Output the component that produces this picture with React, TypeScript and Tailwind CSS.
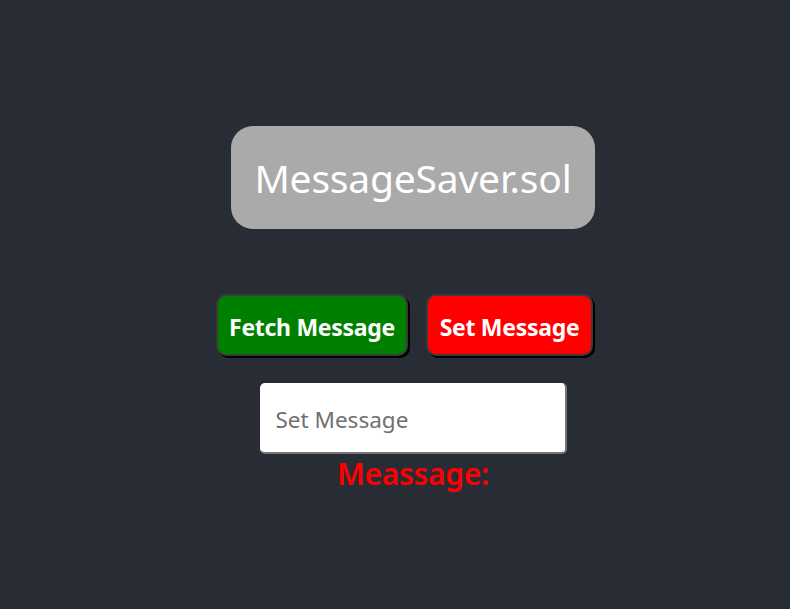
export default function App() {
  return (
    <div
      className="min-h-[609px] bg-[#282c34] flex flex-col items-center pt-[126px] pl-[36px]"
      style={{ fontFamily: '"Noto Sans", "Open Sans", sans-serif' }}
    >
      {/* Title */}
      <div className="w-[364px] h-[103px] rounded-[22px] bg-[#aaaaaa] flex items-center justify-center">
        <h1 className="text-white text-[39px] leading-none tracking-[-0.2px]">MessageSaver.sol</h1>
      </div>

      {/* Buttons */}
      <div className="mt-[65px] flex gap-[18px] -ml-[17px]">
        <button className="w-[192px] h-[62px] rounded-[10px] bg-[#008000] border-2 border-[#3a3a3a] shadow-[2px_2px_0_#000] text-white font-bold text-[23px] leading-none tracking-[-0.3px] pt-[4px]">
          Fetch Message
        </button>
        <button className="w-[167px] h-[62px] rounded-[10px] bg-[#ff0000] border-2 border-[#3a3a3a] shadow-[2px_2px_0_#000] text-white font-bold text-[23px] leading-none tracking-[-0.3px] pt-[4px]">
          Set Message
        </button>
      </div>

      {/* Input */}
      <input
        placeholder="Set Message"
        className="mt-[27px] w-[307px] h-[71px] rounded-[5px] bg-white border-r-2 border-b-2 border-[#777] px-[16px] pt-[3px] text-[22.5px] text-black placeholder:text-[#707070] outline-none"
      />

      <p className="mt-0 text-[#ff0000] text-[30px] font-semibold leading-[40px] tracking-[-0.3px]">Meassage:</p>
    </div>
  );
}
